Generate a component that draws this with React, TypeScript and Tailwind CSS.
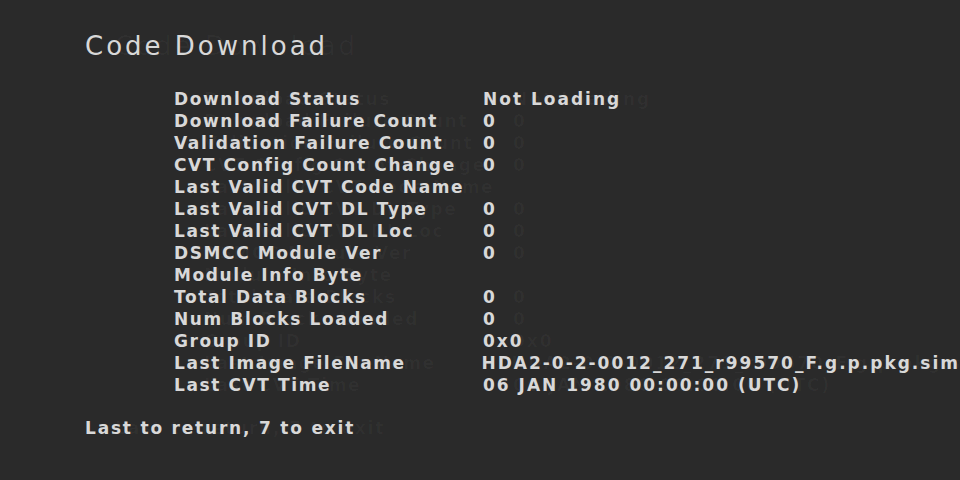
export default function App() {
  const rows: [string, string][] = [
    ["Download Status", "Not Loading"],
    ["Download Failure Count", "0"],
    ["Validation Failure Count", "0"],
    ["CVT Config Count Change", "0"],
    ["Last Valid CVT Code Name", ""],
    ["Last Valid CVT DL Type", "0"],
    ["Last Valid CVT DL Loc", "0"],
    ["DSMCC Module Ver", "0"],
    ["Module Info Byte", ""],
    ["Total Data Blocks", "0"],
    ["Num Blocks Loaded", "0"],
    ["Group ID", "0x0"],
    ["Last Image FileName", "HDA2-0-2-0012_271_r99570_F.g.p.pkg.sim"],
    ["Last CVT Time", "06 JAN 1980 00:00:00 (UTC)"],
  ]

  return (
    <div className="w-[960px] h-[480px] overflow-hidden bg-[#2a2a2a] text-[#d8d8d8] font-['DejaVu_Sans',sans-serif] [text-shadow:30px_0_0_rgba(255,255,255,0.03)]">
      <div className="pl-[85px] pt-[31px]">
        <h1 className="text-[26px] leading-[30px] tracking-[3px]">Code Download</h1>

        <div className="mt-[28px] ml-[89px] flex flex-col">
          {rows.map(([label, value]) => (
            <div key={label} className="flex h-[22px] items-center text-[17px] font-bold whitespace-nowrap">
              <span className="w-[309px] tracking-[1.6px]">{label}</span>
              <span className="tracking-[2px]">{value}</span>
            </div>
          ))}
        </div>

        <p className="mt-[19px] text-[17px] font-bold tracking-[1.8px]">Last to return, 7 to exit</p>
      </div>
    </div>
  )
}
